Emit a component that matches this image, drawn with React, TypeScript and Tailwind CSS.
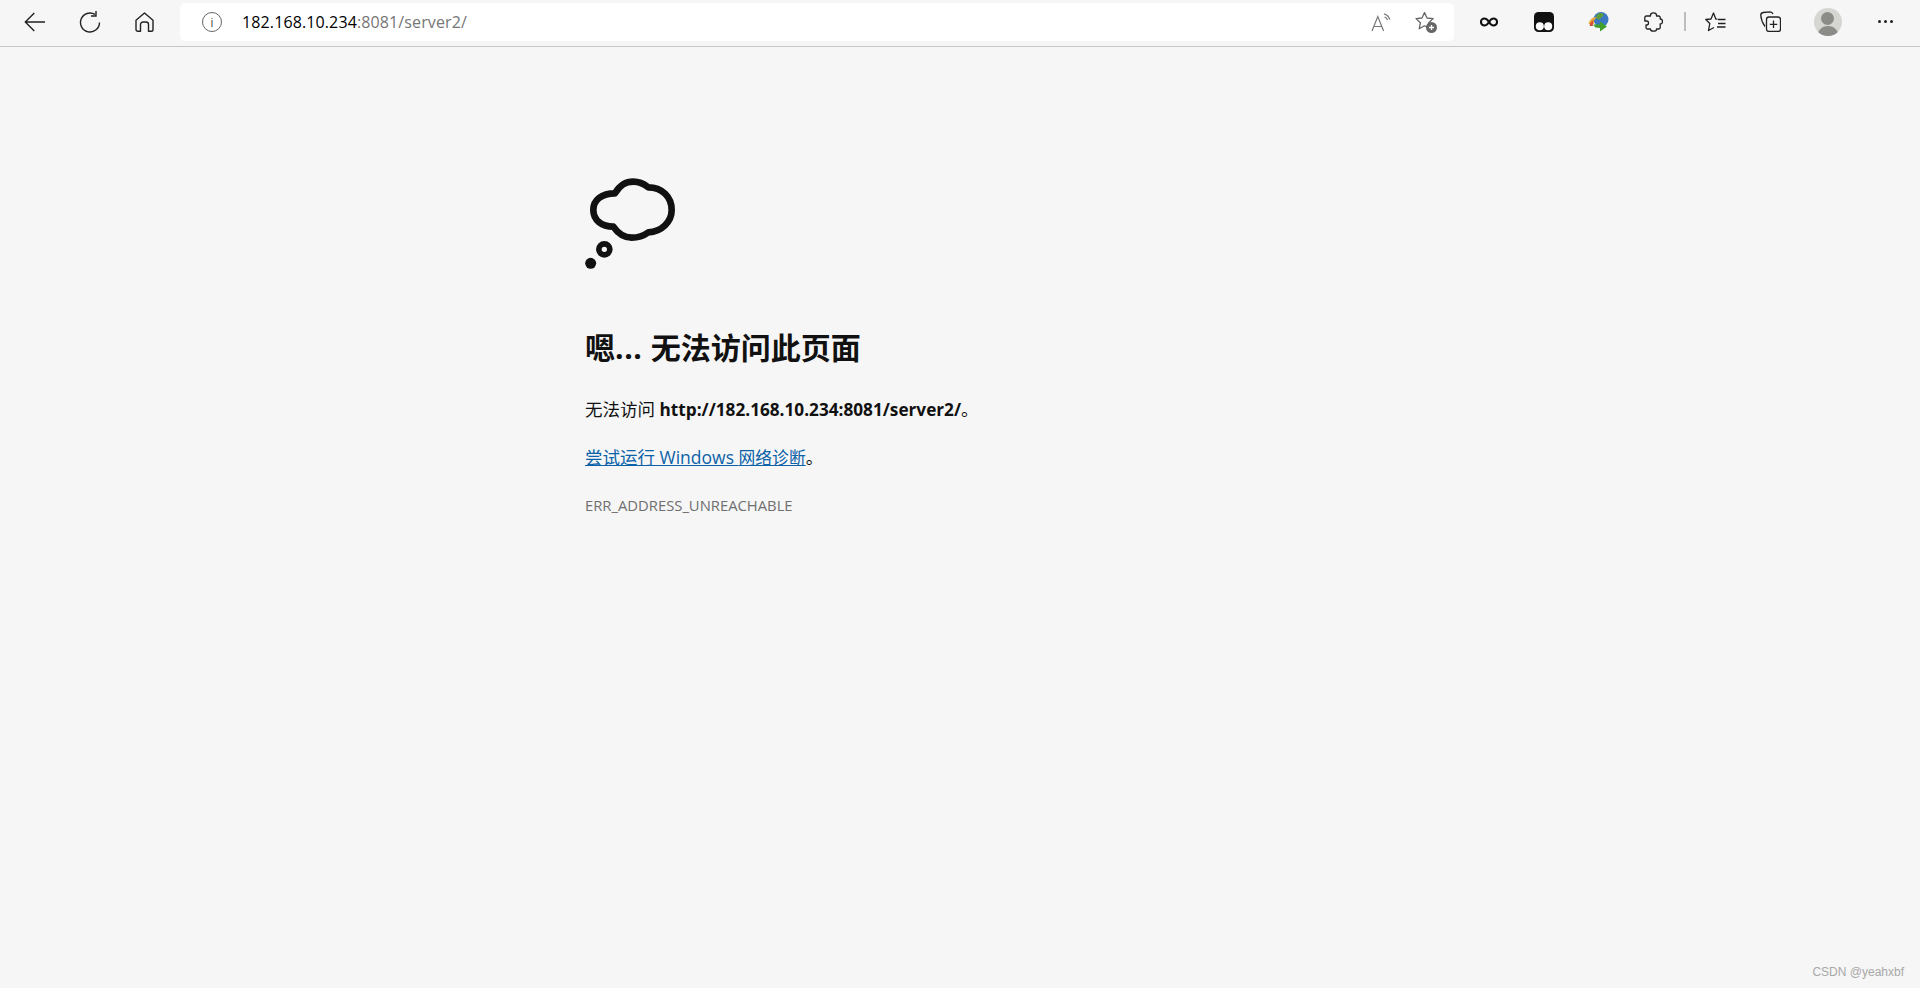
import React from "react";

const Slot = ({ children }: { children: React.ReactNode }) => (
  <div className="w-[55px] h-[43px] flex items-center justify-center shrink-0">{children}</div>
);

export default function App() {
  return (
    <div className="h-screen bg-[#f6f6f6] flex flex-col overflow-hidden font-['Open_Sans','Noto_Sans_CJK_SC',sans-serif] text-black">
      <div className="h-[47px] shrink-0 border-b border-[#c6c6c6] flex items-start pl-[7px]">
        <Slot>
          <svg width="21" height="20" viewBox="0 0 21 20" fill="none" stroke="#222" strokeWidth="1.4"><path d="M1.500 10H21M10.300 1L1.300 10l9 9" /></svg>
        </Slot>
        <Slot>
          <svg width="22" height="22" viewBox="0 0 22 22" fill="none" stroke="#222" strokeWidth="1.4"><path d="M16 3.400A9.500 9.500 0 1 0 20.500 11.500" /><path d="M17 0v5H12" /></svg>
        </Slot>
        <Slot>
          <svg width="19" height="20" viewBox="0 0 19 20" fill="none" stroke="#222" strokeWidth="1.4" strokeLinejoin="round"><path d="M1 8.300L9.500 1 18 8.300V17.500a1.800 1.800 0 0 1-1.800 1.800H13.500V12.500a2.500 2.500 0 0 0-2.500-2.500H8a2.500 2.500 0 0 0-2.500 2.500v6.800H2.800A1.800 1.800 0 0 1 1 17.500z" /></svg>
        </Slot>
        <div className="ml-[8px] mt-[3px] w-[1274px] h-[38px] bg-white rounded-[5px] flex items-center shrink-0">
          <div className="ml-[22px] w-[20px] h-[20px] rounded-full border-[1.5px] border-[#666] flex items-center justify-center">
            <span className="text-[13px] leading-none text-[#666] font-['Liberation_Sans',sans-serif]">i</span>
          </div>
          <div className="ml-[20px] text-[16px] tracking-[0.12px] text-[#767676] leading-none"><span className="text-black">182.168.10.234</span>:8081/server2/</div>
          <div className="ml-auto mr-[16px] flex items-center gap-[24px]">
            <svg width="20" height="19" viewBox="0 0 20 19" fill="none" stroke="#777" strokeWidth="1.2"><path d="M1 18L6.800 3.500 12.600 18M3 13.500h7.600" /><path d="M13 .8c2.800.8 5 2.800 5.800 5.700M13.500 4c1.500.5 2.500 1.500 3 3" /></svg>
            <svg width="23" height="23" viewBox="0 0 23 23" fill="none"><path d="M9.500 1.500l2.500 5.500 6.200.6-4.500 4.200 1.300 6-5.500-3-5.300 3 1.200-6L1 7.600 7 7z" stroke="#666" strokeWidth="1.300" strokeLinejoin="round" /><circle cx="16.500" cy="16.500" r="5.500" fill="#666" /><path d="M16.500 14v5M14 16.500h5" stroke="#fff" strokeWidth="1.300" /></svg>
          </div>
        </div>
        <div className="ml-[7px] flex items-start">
          <Slot>
            <svg width="18" height="10" viewBox="0 0 19 10" fill="none" stroke="#111" strokeWidth="2.200"><path d="M9.500 5C8 2.500 6.500 1.300 4.700 1.300a3.700 3.700 0 0 0 0 7.400C6.500 8.700 8 7.500 9.500 5s3-3.700 4.800-3.700a3.700 3.700 0 0 1 0 7.400C12.500 8.700 11 7.500 9.500 5z" /></svg>
          </Slot>
          <Slot>
            <svg width="20" height="20" viewBox="0 0 20 20"><rect x="0" y="0" width="20" height="20" rx="4.500" fill="#111" /><circle cx="5.800" cy="14.200" r="4" fill="#fff" /><circle cx="14.200" cy="14.200" r="4" fill="#fff" /></svg>
          </Slot>
          <Slot>
            <svg width="21" height="21" viewBox="0 0 21 21">
              <circle cx="13" cy="8.500" r="7.500" fill="#3b78c2" />
              <path d="M9 3.500c2-2 5-2 6-.8s.5 2.500-1 3.300-1.500 2.500-3.500 2.500-3-3-1.500-5z" fill="#5f9c3a" />
              <path d="M0.500 13C2 8 5 5.500 9 6.500 6.500 7.500 5.500 10 6 13z" fill="#e8a93a" />
              <path d="M1.500 15C2.200 11.500 4 9.500 6 9c-1 1.500-1.500 3.500-1 6z" fill="#d84a35" />
              <path d="M5 13.500l7 0V10.500l7 5-7 5V17l-4.500-.5z" fill="#3fa02c" />
            </svg>
          </Slot>
          <Slot>
            <svg width="19" height="20" viewBox="0 0 19 20" fill="none" stroke="#222" strokeWidth="1.300" strokeLinejoin="round"><path d="M6.500 4V3.200C6.500 1.700 8 .8 9.500.8s3 .9 3 2.400V4h2.200A1.500 1.500 0 0 1 16.200 5.500V7h.3c1.300 0 2 1 2 2.500s-.7 2.500-2 2.500h-.3v3.500A1.500 1.500 0 0 1 14.700 17H12.500v.4c0 1-1.500 1.800-3 1.800s-3-.8-3-1.800V17H3.500A1.500 1.500 0 0 1 2 15.500V13h.6c1.200 0 1.900-.8 1.900-2s-.7-2-1.900-2H.8V5.500A1.500 1.500 0 0 1 2.300 4z" /></svg>
          </Slot>
          <div className="ml-[3px] mr-[2px] mt-[12px] w-[2px] h-[19px] bg-[#bdbdbd]" />
          <Slot>
            <svg width="21" height="20" viewBox="0 0 21 20" fill="none" stroke="#222" strokeWidth="1.300" strokeLinejoin="round"><path d="M12.500 7.200L10.800 7 8.500 1 6 7 .8 7.500l4 4L3.500 18.500 9 15.500" /><path d="M13 7.500h7.500M13 11.500h7.500M12 15h8.500" /></svg>
          </Slot>
          <Slot>
            <svg width="21" height="21" viewBox="0 0 21 21" fill="none" stroke="#222" strokeWidth="1.300" strokeLinejoin="round"><path d="M5 15.500C2.500 12 1 8 .8 4.500.7 3 1.700 1.800 3.200 1.500L10 .8c1.500 0 2.500.8 3 2.200" /><rect x="6.500" y="6" width="14" height="14.500" rx="2.500" /><path d="M13.500 9.500v7.500M9.800 13.300h7.500" /></svg>
          </Slot>
          <div className="w-[2px]" />
          <Slot>
            <div className="w-[28px] h-[28px] rounded-full bg-[#d5d5d2] overflow-hidden flex flex-col items-center pt-[4px] gap-[1px]">
              <div className="w-[13px] h-[13px] rounded-full bg-[#8b8b88] shrink-0" />
              <div className="w-[22px] h-[14px] rounded-t-full bg-[#8b8b88] shrink-0" />
            </div>
          </Slot>
          <div className="w-[3px]" />
          <Slot>
            <div className="flex gap-[3px]">
              <div className="w-[3px] h-[3px] rounded-full bg-[#222]" />
              <div className="w-[3px] h-[3px] rounded-full bg-[#222]" />
              <div className="w-[3px] h-[3px] rounded-full bg-[#222]" />
            </div>
          </Slot>
        </div>
      </div>
      <div className="flex-1 flex flex-col pl-[585px] pt-[128px]">
        <svg width="95" height="95" viewBox="45 45 285 285" fill="none">
          <path d="M135 100C150 75 165 65 190 65C210 65 222 72 235 82C275 82 305 110 305 150C305 185 275 215 235 217C220 228 205 233 185 233C165 233 145 222 130 200C95 200 70 180 70 150C70 120 95 100 135 100Z" stroke="#111" strokeWidth="20" strokeLinejoin="round" />
          <circle cx="103" cy="268" r="16.500" stroke="#111" strokeWidth="17" />
          <circle cx="62" cy="310" r="16.500" fill="#111" />
        </svg>
        <h1 className="mt-[58px] text-[30px] leading-[40px] font-bold text-[#111]">嗯<span className="tracking-[0.6px]">... </span>无法访问此页面</h1>
        <p className="mt-[29px] text-[17.500px] leading-[24px] text-[#111]">无法访问 <b className="font-bold text-[17.200px]">http://182.168.10.234:8081/server2/</b>。</p>
        <p className="mt-[23px] text-[17.500px] leading-[24px] text-[#111]"><a className="text-[#0b62a8] underline">尝试运行 Windows <span className="text-[16.800px]">网络诊断</span></a>。</p>
        <p className="mt-[25px] text-[14.800px] leading-[20px] text-[#6f6f6f]">ERR_ADDRESS_UNREACHABLE</p>
        <div className="mt-auto mb-[8px] mr-[16px] self-end text-[12px] leading-[16px] text-[#a8a8a8] font-['Liberation_Sans',sans-serif]">CSDN @yeahxbf</div>
      </div>
    </div>
  );
}
